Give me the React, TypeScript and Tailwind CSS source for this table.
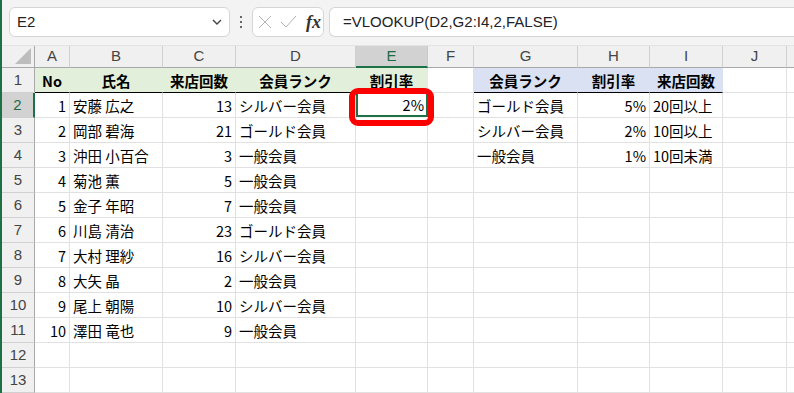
import React from "react";

const W = [
  "w-[35px]",
  "w-[93px]",
  "w-[73px]",
  "w-[120px]",
  "w-[72px]",
  "w-[46px]",
  "w-[104px]",
  "w-[72px]",
  "w-[73px]",
  "w-[64px]",
  "w-[20px]",
];
const LETTERS = ["A", "B", "C", "D", "E", "F", "G", "H", "I", "J", ""];

type Cell = { t?: string; a?: "l" | "r" | "c"; b?: boolean; f?: "g" | "bl"; sel?: boolean };

const members: [string, string, string, string][] = [
  ["1", "安藤 広之", "13", "シルバー会員"],
  ["2", "岡部 碧海", "21", "ゴールド会員"],
  ["3", "沖田 小百合", "3", "一般会員"],
  ["4", "菊池 薫", "5", "一般会員"],
  ["5", "金子 年昭", "7", "一般会員"],
  ["6", "川島 清治", "23", "ゴールド会員"],
  ["7", "大村 理紗", "16", "シルバー会員"],
  ["8", "大矢 晶", "2", "一般会員"],
  ["9", "尾上 朝陽", "10", "シルバー会員"],
  ["10", "澤田 竜也", "9", "一般会員"],
];

const ranks: [string, string, string][] = [
  ["ゴールド会員", "5%", "20回以上"],
  ["シルバー会員", "2%", "10回以上"],
  ["一般会員", "1%", "10回未満"],
];

function buildRows(): Cell[][] {
  const rows: Cell[][] = [];
  rows.push([
    { t: "No", a: "c", b: true, f: "g" },
    { t: "氏名", a: "c", b: true, f: "g" },
    { t: "来店回数", a: "c", b: true, f: "g" },
    { t: "会員ランク", a: "c", b: true, f: "g" },
    { t: "割引率", a: "c", b: true, f: "g" },
    {},
    { t: "会員ランク", a: "c", b: true, f: "bl" },
    { t: "割引率", a: "c", b: true, f: "bl" },
    { t: "来店回数", a: "c", b: true, f: "bl" },
    {},
    {},
  ]);
  for (let i = 0; i < 12; i++) {
    const m = members[i];
    const r = ranks[i];
    const row: Cell[] = [
      m ? { t: m[0], a: "r" } : {},
      m ? { t: m[1], a: "l" } : {},
      m ? { t: m[2], a: "r" } : {},
      m ? { t: m[3], a: "l" } : {},
      i === 0 ? { t: "2%", a: "r", sel: true } : {},
      {},
      r ? { t: r[0], a: "l" } : {},
      r ? { t: r[1], a: "r" } : {},
      r ? { t: r[2], a: "l" } : {},
      {},
      {},
    ];
    rows.push(row);
  }
  return rows;
}

const rows = buildRows();

function CellView({ c, i }: { c: Cell; i: number }) {
  const align = c.a === "r" ? "justify-end" : c.a === "c" ? "justify-center" : "justify-start";
  let fill = "bg-white border-r border-b border-[#e1e1e1]";
  if (c.f === "g") fill = "bg-[#e2efda] border-r border-b border-r-[#e2efda] border-b-black";
  if (c.f === "bl") fill = "bg-[#d9e1f2] border-r border-b border-r-[#d9e1f2] border-b-black";
  if (c.sel) fill = "bg-white border-2 border-[#1e7145]";
  return (
    <div
      className={`${W[i]} h-full shrink-0 flex items-center ${align} ${fill} ${c.sel ? "px-[2px] -mt-[1px] h-[26px]" : "px-[3px]"} ${
        c.b ? "font-bold" : "font-normal"
      } pt-[2px] text-[14.5px] leading-none text-black whitespace-nowrap overflow-hidden`}
      style={{ fontFamily: "'Noto Sans CJK JP', 'Noto Sans', sans-serif" }}
    >
      {c.t}
    </div>
  );
}

export default function App() {
  const sans = { fontFamily: "'Liberation Sans', Arial, sans-serif" };
  return (
    <div className="w-[794px] h-[393px] overflow-hidden flex relative bg-[#f3f3f3]">
      <div className="w-[2px] h-full bg-[#1e7145] shrink-0" />
      <div className="flex flex-col flex-1 min-w-0">
        {/* formula bar */}
        <div className="h-[45px] shrink-0 flex items-start pt-[7px]" style={sans}>
          <div className="ml-[7px] w-[221px] h-[30px] shrink-0 bg-white border border-[#d6d6d6] rounded-[6px] flex items-center justify-between pl-[7px] pr-[5px]">
            <span className="text-[15px] text-[#222]">E2</span>
            <svg width="14" height="14" viewBox="0 0 14 14" fill="none">
              <path d="M3 5 L7 9 L11 5" stroke="#444" strokeWidth="1.4" />
            </svg>
          </div>
          <div className="w-[22px] h-[30px] shrink-0 flex flex-col items-center justify-center gap-[3px]">
            <div className="w-[2px] h-[2px] bg-[#666]" />
            <div className="w-[2px] h-[2px] bg-[#666]" />
            <div className="w-[2px] h-[2px] bg-[#666]" />
          </div>
          <div className="w-[72px] h-[30px] shrink-0 bg-white border border-[#d6d6d6] rounded-[6px] flex items-center pl-[5px]">
            <svg width="14" height="14" viewBox="0 0 14 14" fill="none">
              <path d="M1 1 L13 13 M13 1 L1 13" stroke="#b3b3b3" strokeWidth="1" />
            </svg>
            <svg width="17" height="14" viewBox="0 0 17 14" fill="none" className="ml-[8px]">
              <path d="M1 7 L6 12 L16 1" stroke="#b3b3b3" strokeWidth="1" />
            </svg>
            <span
              className="ml-[9px] text-[18px] italic font-bold text-[#333] leading-none"
              style={{ fontFamily: "'Liberation Serif', 'DejaVu Serif', serif" }}
            >
              fx
            </span>
          </div>
          <div className="ml-[5px] flex-1 h-[30px] bg-white border border-r-0 border-[#d6d6d6] rounded-l-[6px] flex items-center pl-[13px]">
            <span className="text-[15px] text-[#222]">=VLOOKUP(D2,G2:I4,2,FALSE)</span>
          </div>
        </div>
        {/* column header */}
        <div className="h-[23px] shrink-0 flex bg-[#f0f0f0] border-t border-[#e3e3e3]" style={sans}>
          <div className="w-[33px] shrink-0 h-full border-r border-b border-[#a8a8a8] relative">
            <svg className="absolute right-[3px] bottom-[3px]" width="16" height="16" viewBox="0 0 16 16">
              <polygon points="16,0 16,16 0,16" fill="#bdbdbd" />
            </svg>
          </div>
          {LETTERS.map((l, i) => (
            <div
              key={i}
              className={`${W[i]} shrink-0 h-full flex items-center justify-center text-[15px] ${
                i === 4
                  ? "bg-[#d2d2d2] text-[#1e6b41] border-r border-r-[#c8c8c8] border-b-2 border-b-[#1e7145]"
                  : "text-[#444] border-r border-b border-r-[#d0d0d0] border-b-[#a8a8a8]"
              }`}
            >
              {l}
            </div>
          ))}
        </div>
        {/* rows */}
        {rows.map((r, ri) => (
          <div key={ri} className="h-[25px] shrink-0 flex">
            <div
              className={`w-[33px] shrink-0 h-full flex items-center justify-center text-[15px] border-b border-b-[#d0d0d0] ${
                ri === 1
                  ? "bg-[#d2d2d2] text-[#1e6b41] border-r-2 border-r-[#1e7145]"
                  : "bg-[#f0f0f0] text-[#444] border-r border-r-[#a8a8a8]"
              }`}
              style={sans}
            >
              {ri + 1}
            </div>
            {r.map((c, ci) => (
              <CellView key={ci} c={c} i={ci} />
            ))}
          </div>
        ))}
      </div>
      <div className="absolute left-[349px] top-[88px] w-[85px] h-[38px] border-[6px] border-[#ff0000] rounded-[9px]" />
    </div>
  );
}
